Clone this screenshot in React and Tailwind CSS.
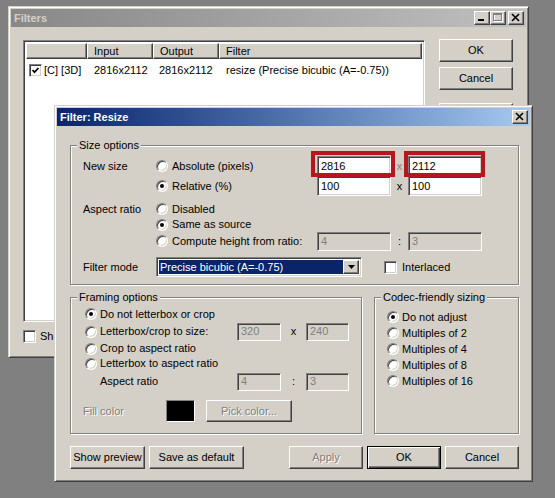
import React from 'react';

// classic win2k bevels
const raised = 'border border-t-white border-l-white border-r-[#404040] border-b-[#404040] shadow-[inset_-1px_-1px_0_#808080]';
const sunken = 'border border-t-[#808080] border-l-[#808080] border-r-white border-b-white shadow-[inset_1px_1px_0_#404040,inset_-1px_-1px_0_#d4d0c8]';
const frame = 'border border-t-[#d4d0c8] border-l-[#d4d0c8] border-r-[#404040] border-b-[#404040] shadow-[inset_1px_1px_0_#fff,inset_-1px_-1px_0_#808080] p-[2px] bg-[#d4d0c8]';
const etched = 'border border-[#808080] shadow-[inset_1px_1px_0_#fff,1px_1px_0_#fff]';
const grayText = 'text-[#808080] [text-shadow:1px_1px_0_#fff]';

const Radio = ({ checked }) => (
  <span className="inline-flex w-[12px] h-[12px] shrink-0 items-center justify-center rounded-full bg-white border border-t-[#808080] border-l-[#808080] border-r-white border-b-white shadow-[inset_1px_1px_0_#404040,inset_-1px_-1px_0_#d4d0c8]">
    {checked && <span className="w-[4px] h-[4px] rounded-full bg-black" />}
  </span>
);

const Check = ({ checked }) => (
  <span className={`inline-flex w-[13px] h-[13px] shrink-0 items-center justify-center bg-white ${sunken}`}>
    {checked && (
      <svg width="9" height="9" viewBox="0 0 9 9">
        <polyline points="1.5,4 3.5,6.2 7.5,2" fill="none" stroke="#000" strokeWidth="1.7" />
      </svg>
    )}
  </span>
);

const Opt = ({ label, checked, className = '', gap = 'gap-[3px]' }) => (
  <div className={`flex items-center ${gap} ${className}`}>
    <Radio checked={checked} />
    <span>{label}</span>
  </div>
);

const Edit = ({ value, disabled, className = '' }) => (
  <div className={`${sunken} ${disabled ? 'bg-[#d4d0c8] text-[#808080]' : 'bg-white text-black'} flex items-center pl-[3px] ${className}`}>
    {value}
  </div>
);

// red annotation drawn over the edit field
const Marked = ({ children, className }) => (
  <div className="relative">
    {children}
    <span className={`absolute border-4 border-[#b8161f] pointer-events-none ${className}`} />
  </div>
);

const Button = ({ children, className = '', disabled, primary }) => (
  <div
    className={`flex items-center justify-center bg-[#d4d0c8] ${
      primary
        ? 'border border-black shadow-[inset_1px_1px_0_#fff,inset_-1px_-1px_0_#404040,inset_-2px_-2px_0_#808080]'
        : raised
    } ${disabled ? grayText : 'text-black'} ${className}`}
  >
    {children}
  </div>
);

const Group = ({ title, className = '', children }) => (
  <div className={`relative ${etched} ${className}`}>
    <span className="absolute -top-[8px] left-[6px] px-[2px] bg-[#d4d0c8] leading-[14px]">{title}</span>
    {children}
  </div>
);

const CapBtn = ({ kind }) => (
  <div className={`w-[16px] h-[14px] bg-[#d4d0c8] ${raised} flex items-center justify-center`}>
    <svg width="14" height="12" viewBox="0 0 14 12">
      {kind === 'min' && <rect x="3" y="7" width="6" height="2" fill="#000" />}
      {kind === 'max' && (
        <g>
          <rect x="3.5" y="2.5" width="8" height="7" fill="none" stroke="#fff" />
          <rect x="2.5" y="1.5" width="8" height="7" fill="none" stroke="#808080" />
          <rect x="2" y="2" width="9" height="1" fill="#808080" />
        </g>
      )}
      {kind === 'close' && (
        <path d="M3 2 L10 9 M10 2 L3 9" stroke="#000" strokeWidth="1.6" fill="none" />
      )}
    </svg>
  </div>
);

const TitleBar = ({ title, active }) => (
  <div
    className={`h-[18px] shrink-0 flex items-center pl-[3px] pr-[2px] font-bold bg-linear-to-r ${
      active ? 'from-[#0a246a] to-[#a6caf0] text-white' : 'from-[#888888] to-[#c0c0c0] text-[#d4d0c8]'
    }`}
  >
    <span className="flex-1">{title}</span>
    {active ? (
      <CapBtn kind="close" />
    ) : (
      <div className="flex items-center">
        <CapBtn kind="min" />
        <CapBtn kind="max" />
        <div className="w-[2px]" />
        <CapBtn kind="close" />
      </div>
    )}
  </div>
);

const FiltersWindow = () => (
  <div className={`absolute left-[8px] top-[6px] w-[521px] h-[352px] flex flex-col ${frame}`}>
    <TitleBar title="Filters" />
    <div className="flex pl-[12px] pt-[13px] gap-[14px]">
      <div className="flex flex-col">
        <div className={`w-[402px] h-[282px] bg-white ${sunken} p-[2px] flex flex-col`}>
          <div className="flex h-[16px]">
            <div className={`w-[61px] bg-[#d4d0c8] ${raised}`} />
            <div className={`w-[66px] bg-[#d4d0c8] ${raised} pl-[6px] flex items-center`}>Input</div>
            <div className={`w-[66px] bg-[#d4d0c8] ${raised} pl-[6px] flex items-center`}>Output</div>
            <div className={`flex-1 bg-[#d4d0c8] ${raised} pl-[6px] flex items-center`}>Filter</div>
          </div>
          <div className="flex h-[16px] mt-[3px] items-center whitespace-nowrap">
            <div className="w-[61px] pl-[3px] flex items-center gap-[2px]">
              <Check checked />
              <span>[C] [3D]</span>
            </div>
            <div className="w-[66px] pl-[7px]">2816x2112</div>
            <div className="w-[66px] pl-[6px]">2816x2112</div>
            <div className="pl-[7px]">resize (Precise bicubic (A=-0.75))</div>
          </div>
        </div>
        <div className="flex items-center gap-[4px] mt-[8px] whitespace-nowrap">
          <Check />
          <span>Show image formats</span>
        </div>
      </div>
      <div className="flex flex-col w-[74px] -mt-[1px]">
        <Button className="h-[23px]">OK</Button>
        <Button className="h-[23px] mt-[5px]">Cancel</Button>
        <Button className="h-[23px] mt-[13px]" />
      </div>
    </div>
  </div>
);

const ResizeWindow = () => (
  <div className={`absolute left-[54px] top-[105px] w-[479px] h-[377px] flex flex-col ${frame}`}>
    <TitleBar title="Filter: Resize" active />
    <div className="flex flex-col pl-[13px] pr-[11px] pt-[19px] whitespace-nowrap">
      <Group title="Size options" className="h-[140px] pt-[10px] pl-[12px]">
        <div className="flex items-center h-[20px]">
          <span className="w-[73px]">New size</span>
          <Opt className="w-[161px]" gap="gap-[4px]" label="Absolute (pixels)" />
          <Marked className="-left-[6px] -right-[4px] -top-[5px] -bottom-[1px]">
            <Edit value="2816" className="w-[74px] h-[20px]" />
          </Marked>
          <span className="w-[17px] text-center text-[#808080]">x</span>
          <Marked className="-left-[4px] -right-[3px] -top-[5px] -bottom-[1px]">
            <Edit value="2112" className="w-[74px] h-[20px]" />
          </Marked>
        </div>
        <div className="flex items-center h-[20px]">
          <span className="w-[73px]" />
          <Opt className="w-[161px]" gap="gap-[4px]" label="Relative (%)" checked />
          <Edit value="100" className="w-[74px] h-[20px]" />
          <span className="w-[17px] text-center">x</span>
          <Edit value="100" className="w-[74px] h-[20px]" />
        </div>
        <div className="flex items-center h-[16px] mt-[5px]">
          <span className="w-[73px]">Aspect ratio</span>
          <Opt gap="gap-[4px]" label="Disabled" />
        </div>
        <div className="flex items-center h-[15px]">
          <span className="w-[73px]" />
          <Opt gap="gap-[4px]" label="Same as source" checked />
        </div>
        <div className="flex items-center h-[18px]">
          <span className="w-[73px]" />
          <Opt className="w-[161px]" gap="gap-[4px]" label="Compute height from ratio:" />
          <Edit value="4" disabled className="w-[74px] h-[19px]" />
          <span className="w-[17px] text-center">:</span>
          <Edit value="3" disabled className="w-[74px] h-[19px]" />
        </div>
        <div className="flex items-center h-[20px] mt-[7px]">
          <span className="w-[73px]">Filter mode</span>
          <div className={`${sunken} bg-white w-[206px] h-[20px] flex p-[2px]`}>
            <div className="flex-1 bg-[#0a246a] text-white flex items-center pl-[1px]">Precise bicubic (A=-0.75)</div>
            <div className={`${raised} bg-[#d4d0c8] w-[16px] flex items-center justify-center`}>
              <svg width="7" height="4" viewBox="0 0 7 4">
                <path d="M0 0h7L3.5 4z" fill="#000" />
              </svg>
            </div>
          </div>
          <div className="flex items-center gap-[5px] ml-[22px]">
            <Check />
            <span>Interlaced</span>
          </div>
        </div>
      </Group>

      <div className="flex gap-[12px] mt-[12px] h-[137px]">
        <Group title="Framing options" className="w-[292px] pt-[8px] pl-[14px]">
          <div className="flex items-center h-[16px]">
            <Opt label="Do not letterbox or crop" checked />
          </div>
          <div className="flex items-center h-[19px]">
            <Opt className="w-[152px]" label="Letterbox/crop to size:" />
            <Edit value="320" disabled className="w-[44px] h-[18px]" />
            <span className="w-[25px] text-center">x</span>
            <Edit value="240" disabled className="w-[43px] h-[18px]" />
          </div>
          <div className="flex items-center h-[15px]">
            <Opt label="Crop to aspect ratio" />
          </div>
          <div className="flex items-center h-[15px]">
            <Opt label="Letterbox to aspect ratio" />
          </div>
          <div className="flex items-center h-[19px] mt-[1px]">
            <span className="w-[152px] pl-[15px]">Aspect ratio</span>
            <Edit value="4" disabled className="w-[44px] h-[18px]" />
            <span className="w-[25px] text-center">:</span>
            <Edit value="3" disabled className="w-[43px] h-[18px]" />
          </div>
          <div className="flex items-center h-[22px] mt-[9px] -ml-[2px]">
            <span className={`w-[83px] ${grayText}`}>Fill color</span>
            <div className="w-[29px] h-[22px] bg-black border border-t-[#808080] border-l-[#808080] border-r-white border-b-white" />
            <Button disabled className="w-[86px] h-[22px] ml-[11px]">Pick color...</Button>
          </div>
        </Group>
        <Group title="Codec-friendly sizing" className="flex-1 pt-[11px] pl-[12px]">
          <div className="flex items-center h-[16px]"><Opt label="Do not adjust" checked /></div>
          <div className="flex items-center h-[16px]"><Opt label="Multiples of 2" /></div>
          <div className="flex items-center h-[16px]"><Opt label="Multiples of 4" /></div>
          <div className="flex items-center h-[16px]"><Opt label="Multiples of 8" /></div>
          <div className="flex items-center h-[16px]"><Opt label="Multiples of 16" /></div>
        </Group>
      </div>

      <div className="flex items-center h-[23px] mt-[12px]">
        <Button className="w-[75px] h-[23px]">Show preview</Button>
        <Button className="w-[95px] h-[23px] ml-[4px]">Save as default</Button>
        <div className="flex gap-[4px] ml-auto">
          <Button disabled className="w-[74px] h-[23px]">Apply</Button>
          <Button primary className="w-[74px] h-[23px]">OK</Button>
          <Button className="w-[74px] h-[23px]">Cancel</Button>
        </div>
      </div>
    </div>
  </div>
);

export default function App() {
  return (
    <div className="relative w-[555px] h-[498px] overflow-hidden bg-[#808080] font-['Liberation_Sans',Arial,sans-serif] text-[11px] leading-[13px] text-black">
      <FiltersWindow />
      <ResizeWindow />
    </div>
  );
}
